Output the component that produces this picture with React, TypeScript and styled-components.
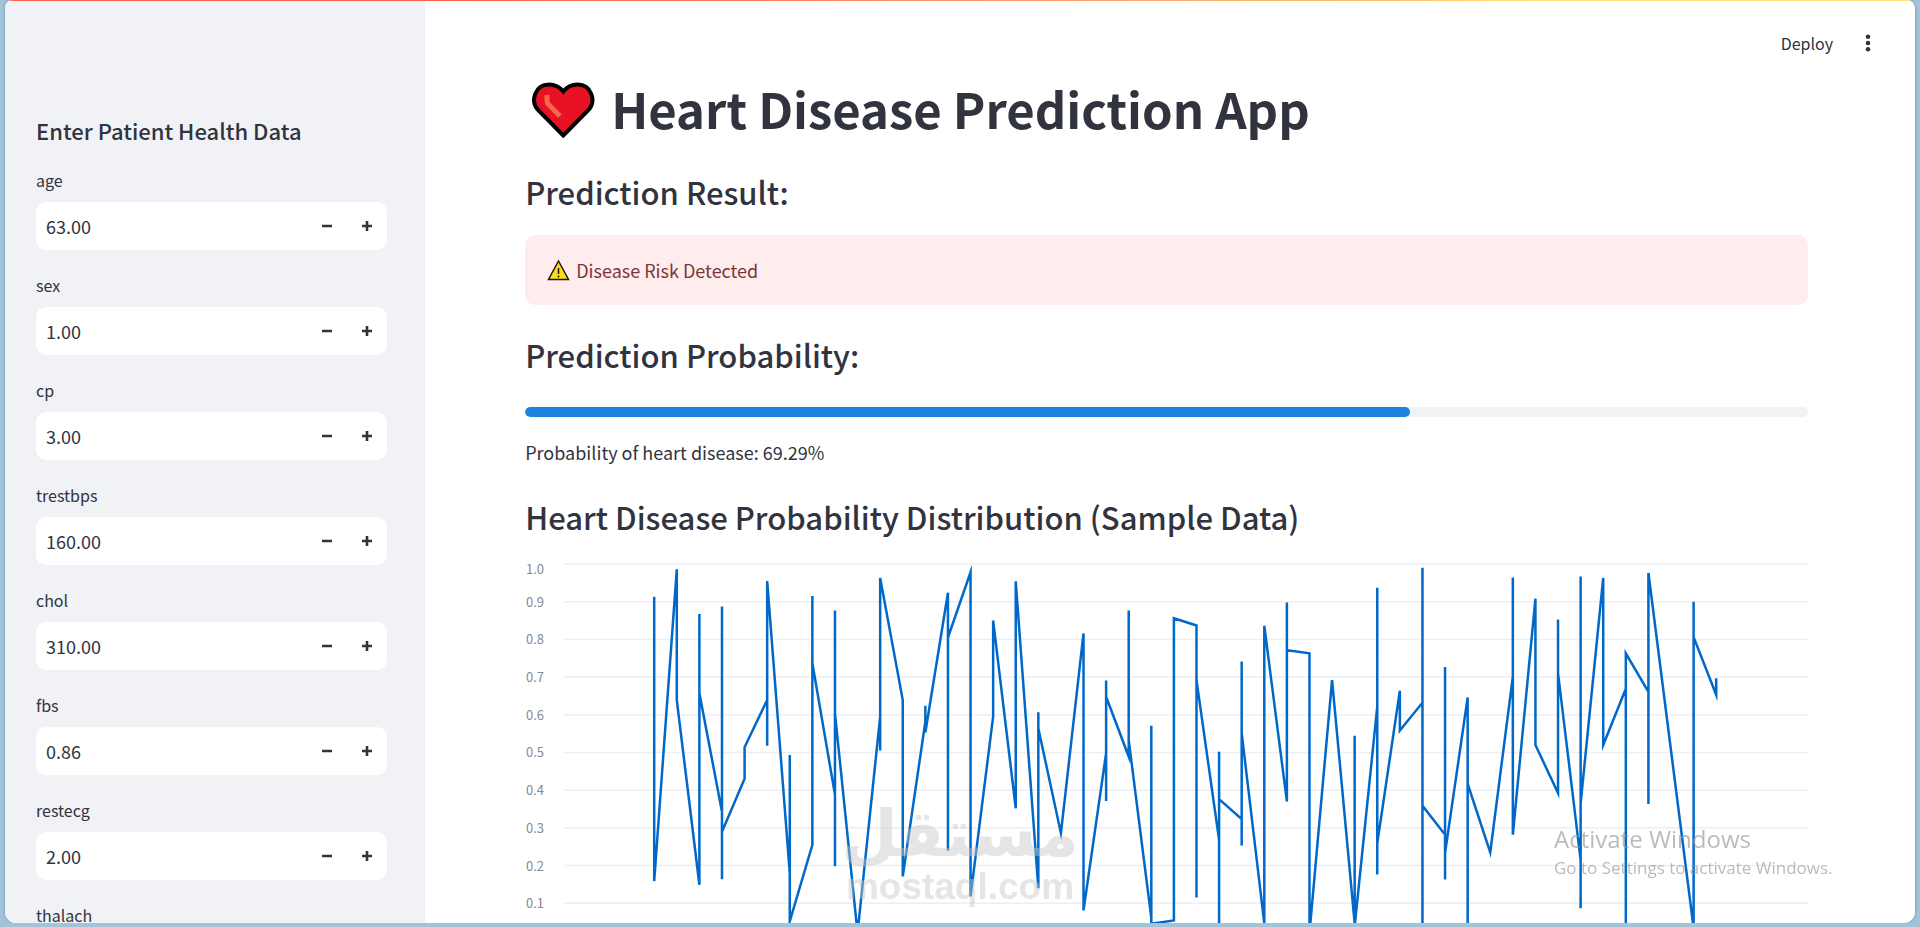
import React, { useState } from "react";
import styled, { createGlobalStyle } from "styled-components";

const GlobalStyle = createGlobalStyle`
  *, *::before, *::after { box-sizing: border-box; }
  body {
    margin: 0;
    background: #a2c4d9;
    color: #31333f;
    font-family: "Noto Sans CJK SC", "Noto Sans", sans-serif;
    font-size: 18px;
  }
  h1, h2, p { margin: 0; }
  button, input { font: inherit; color: inherit; }
`;

const Frame = styled.div`
  position: relative;
  display: flex;
  height: calc(100vh - 4px);
  margin: 0 5px;
  overflow: hidden;
  border-radius: 8px 8px 11px 11px;
  background: #ffffff;
  box-shadow: 0 0 3px rgba(60, 100, 130, 0.6);
`;

const Decoration = styled.div`
  position: absolute;
  inset: 0 0 auto 0;
  height: 1px;
  background: linear-gradient(90deg, #ff5b4d 20%, #ffbe70 72%, #ffe27a 80%);
`;

const Sidebar = styled.aside`
  display: flex;
  flex-direction: column;
  gap: 21px;
  flex: none;
  width: 22%;
  overflow: hidden;
  padding: 115px 38px 0 31px;
  background: #f0f2f6;
`;

const SidebarTitle = styled.h2`
  font-size: 22px;
  font-weight: 500;
  line-height: 30px;
`;

const Fields = styled.form`
  display: flex;
  flex-direction: column;
  gap: 21px;
`;

const Field = styled.div`
  display: flex;
  flex-direction: column;
  gap: 8px;
`;

const FieldLabel = styled.label`
  font-size: 16px;
  line-height: 28px;
`;

const NumberBox = styled.div`
  display: flex;
  height: 48px;
  overflow: hidden;
  border-radius: 10px;
  background: #ffffff;
`;

const NumberInput = styled.input`
  flex: 1;
  min-width: 0;
  padding: 0 10px;
  border: 0;
  outline: 0;
  background: transparent;
`;

const StepButton = styled.button`
  display: grid;
  place-items: center;
  width: 40px;
  padding: 0;
  border: 0;
  background: transparent;
  cursor: pointer;
`;

const Main = styled.main`
  flex: 1;
  min-width: 0;
  overflow: hidden;
`;

const Header = styled.header`
  display: flex;
  align-items: center;
  justify-content: flex-end;
  gap: 20px;
  height: 78px;
  padding: 8px 32px 0 0;
`;

const HeaderButton = styled.button`
  display: grid;
  place-items: center;
  min-width: 30px;
  height: 32px;
  padding: 0;
  border: 0;
  background: transparent;
  font-size: 16px;
  line-height: 32px;
  cursor: pointer;
`;

const Content = styled.div`
  display: flex;
  flex-direction: column;
  padding: 0 107px 0 100px;
`;

const Title = styled.h1`
  display: flex;
  align-items: center;
  gap: 16px;
  padding: 0 0 4px 7px;
  font-size: 49px;
  font-weight: 700;
  line-height: 60px;
`;

const Section = styled.section<{ $gap: number }>`
  display: flex;
  flex-direction: column;
  gap: ${(p) => p.$gap}px;
  padding-top: 29px;
`;

const Subheader = styled.h2`
  font-size: 31px;
  font-weight: 500;
  line-height: 42px;
`;

const Alert = styled.div`
  display: flex;
  align-items: center;
  gap: 6px;
  height: 70px;
  padding: 0 22px;
  border-radius: 10px;
  background: #ffecec;
  color: #7d353b;
`;

const Track = styled.div`
  height: 10px;
  overflow: hidden;
  border-radius: 5px;
  background: #f0f2f6;
`;

const Bar = styled.div`
  height: 100%;
  border-radius: 5px;
  background: #1c83e1;
`;

const Caption = styled.p`
  padding-top: 20px;
  line-height: 30px;
`;

const ChartSvg = styled.svg`
  display: block;
  width: 100%;
  height: auto;
  font-size: 13px;
`;

const Watermark = styled.div`
  position: fixed;
  left: 50%;
  bottom: 20px;
  width: 240px;
  margin-left: -120px;
  display: flex;
  flex-direction: column;
  align-items: center;
  color: #c5c5c5;
  opacity: 0.45;
  pointer-events: none;
  font-weight: 700;
`;

const WatermarkArabic = styled.span`
  font-family: "DejaVu Sans", sans-serif;
  font-size: 65px;
  line-height: 66px;
`;

const WatermarkLatin = styled.span`
  font-family: "Liberation Sans", sans-serif;
  font-size: 37px;
  line-height: 40px;
`;

const Activation = styled.div`
  position: fixed;
  right: 82px;
  bottom: 46px;
  width: 284px;
  color: rgba(150, 150, 150, 0.65);
  font-family: "Open Sans", sans-serif;
  pointer-events: none;
  white-space: nowrap;
`;

const ActivationTitle = styled.p`
  font-size: 24px;
  line-height: 32px;
`;

const ActivationText = styled.p`
  font-size: 17px;
  line-height: 26px;
`;

const patientFields = [
  { name: "age", value: 63 },
  { name: "sex", value: 1 },
  { name: "cp", value: 3 },
  { name: "trestbps", value: 160 },
  { name: "chol", value: 310 },
  { name: "fbs", value: 0.86 },
  { name: "restecg", value: 2 },
  { name: "thalach", value: 173 },
];

// Sampled probabilities in thousandths, one list for each position on the x axis.
const samples: number[][] = [
  [913, 159], [986, 639], [149, 867, 657], [343, 887, 164, 290], [430, 514],
  [639, 518, 955], [180, 493, 52], [255, 915, 737], [388, 877, 198, 604], [21],
  [595, 505, 963], [639, 171], [582, 624, 553], [924, 240, 805], [978, 118],
  [595, 850], [352, 954], [140, 607, 564], [286], [816, 81],
  [498, 371, 691, 648], [489, 877, 533], [61, 571, 46], [54, 856], [837, 115, 692],
  [268, 502, 12, 376], [323, 253, 741, 551], [47, 836], [370, 898, 771], [763, 21],
  [692], [47, 544, 39], [622, 937, 176, 259], [664, 558], [632, 990, 3, 359],
  [282, 727, 163, 233], [646, 3, 417], [235], [701, 964, 282], [908, 520],
  [392, 853, 710], [215, 87, 967, 365], [963, 520], [669, 3, 763], [661, 363, 976],
  [], [34, 900, 806], [653, 697],
];

const CHART = { width: 1283, height: 430, left: 39, top: 25, plot: 377, first: 129.2, step: 22.6 };

const yOf = (value: number) => CHART.top + CHART.plot * (1 - value);

function LineChart() {
  const points = samples
    .flatMap((ys, i) => ys.map((y) => `${(CHART.first + CHART.step * i).toFixed(1)},${yOf(y / 1000).toFixed(1)}`))
    .join(" ");
  const ticks = Array.from({ length: 11 }, (_, i) => (10 - i) / 10);
  return (
    <ChartSvg viewBox={`0 0 ${CHART.width} ${CHART.height}`} role="img" aria-label="Heart disease probability line chart">
      {ticks.map((tick) => (
        <g key={tick}>
          <line x1={CHART.left} x2={CHART.width} y1={yOf(tick)} y2={yOf(tick)} stroke="#eceef4" strokeWidth="1.5" />
          <text x="19" y={tick === 1 ? yOf(1) + 10 : yOf(tick) + 5} textAnchor="end" fill="#888a94">
            {tick.toFixed(1)}
          </text>
        </g>
      ))}
      <polyline points={points} fill="none" stroke="#0068c9" strokeWidth="2.5" strokeMiterlimit="10" />
    </ChartSvg>
  );
}

function HeartIcon() {
  return (
    <svg width="63" height="60" viewBox="0 0 63 60" aria-hidden="true">
      <path
        d="M31.300 57.500 L6 32 C-2 23 3 6.500 17 6.500 C24 6.500 28.500 10 31.300 13.500 C34 10 38.500 6.500 45.500 6.500 C59.500 6.500 64.500 23 56.500 32 Z"
        fill="#e81224"
        stroke="#000000"
        strokeWidth="4"
      />
      <path d="M15 17 V23 Q15 25 16.500 26.500 L28 38" fill="none" stroke="#f4694c" strokeWidth="5" />
    </svg>
  );
}

function WarningIcon() {
  return (
    <svg width="23" height="22" viewBox="0 0 23 22" aria-hidden="true">
      <path d="M11.500 2 L21.500 20.500 H1.500 Z" fill="#ffdd15" stroke="#1a1a1a" strokeWidth="1.500" />
      <path d="M11.500 9 V15 M11.500 16.500 V18.500" stroke="#1a1a1a" strokeWidth="1.500" />
    </svg>
  );
}

function NumberField({ name, value }: { name: string; value: number }) {
  const [current, setCurrent] = useState(value.toFixed(2));
  const step = (by: number) => setCurrent(((parseFloat(current) || 0) + by).toFixed(2));
  return (
    <Field>
      <FieldLabel htmlFor={name}>{name}</FieldLabel>
      <NumberBox>
        <NumberInput id={name} inputMode="decimal" value={current} onChange={(e) => setCurrent(e.target.value)} />
        <StepButton type="button" aria-label={`Decrease ${name}`} onClick={() => step(-0.01)}>
          <svg width="10" height="10" viewBox="0 0 10 10">
            <path d="M0 5 H10" stroke="#31333f" strokeWidth="2.600" />
          </svg>
        </StepButton>
        <StepButton type="button" aria-label={`Increase ${name}`} onClick={() => step(0.01)}>
          <svg width="10" height="10" viewBox="0 0 10 10">
            <path d="M0 5 H10 M5 0 V10" stroke="#31333f" strokeWidth="2.600" />
          </svg>
        </StepButton>
      </NumberBox>
    </Field>
  );
}

export default function App() {
  const probability = 69.29;
  return (
    <>
      <GlobalStyle />
      <Frame>
        <Sidebar>
          <SidebarTitle>Enter Patient Health Data</SidebarTitle>
          <Fields>
            {patientFields.map((field) => (
              <NumberField key={field.name} {...field} />
            ))}
          </Fields>
        </Sidebar>
        <Main>
          <Header>
            <HeaderButton type="button">Deploy</HeaderButton>
            <HeaderButton type="button" aria-label="Main menu">
              <svg width="6" height="20" viewBox="0 0 6 20" fill="#31333f">
                <circle cx="3" cy="3.700" r="2.300" />
                <circle cx="3" cy="10" r="2.300" />
                <circle cx="3" cy="16.300" r="2.300" />
              </svg>
            </HeaderButton>
          </Header>
          <Content>
            <Title>
              <HeartIcon />
              Heart Disease Prediction App
            </Title>
            <Section $gap={22}>
              <Subheader>Prediction Result:</Subheader>
              <Alert role="alert">
                <WarningIcon />
                Disease Risk Detected
              </Alert>
            </Section>
            <Section $gap={31}>
              <Subheader>Prediction Probability:</Subheader>
              <Track role="progressbar" aria-valuenow={probability} aria-label="Probability of heart disease">
                <Bar style={{ width: `${Math.floor(probability)}%` }} />
              </Track>
            </Section>
            <Caption>Probability of heart disease: {probability}%</Caption>
            <Section $gap={1}>
              <Subheader>Heart Disease Probability Distribution (Sample Data)</Subheader>
              <LineChart />
            </Section>
          </Content>
        </Main>
        <Decoration />
      </Frame>
      <Watermark>
        <WatermarkArabic lang="ar">مستقل</WatermarkArabic>
        <WatermarkLatin>mostaql.com</WatermarkLatin>
      </Watermark>
      <Activation>
        <ActivationTitle>Activate Windows</ActivationTitle>
        <ActivationText>Go to Settings to activate Windows.</ActivationText>
      </Activation>
    </>
  );
}
